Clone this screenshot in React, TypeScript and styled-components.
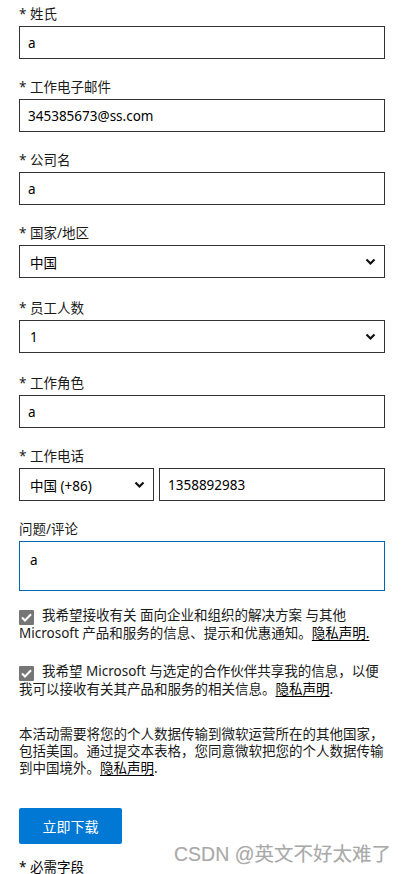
import React from "react";
import styled, { createGlobalStyle } from "styled-components";

const Global = createGlobalStyle`
  html, body { margin: 0; padding: 0; background: #fff; }
  body {
    font-family: "Noto Sans", "Noto Sans CJK SC", sans-serif;
    color: #000;
    font-size: 13.5px;
  }
  * { box-sizing: border-box; }
`;

const Page = styled.div`
  position: relative;
  width: 405px;
  height: 874px;
  overflow: hidden;
  padding: 4px 20px 0 19px;
  display: flex;
  flex-direction: column;
  & > * { flex-shrink: 0; }
`;

const Field = styled.div<{ $extra?: number }>`
  display: flex;
  flex-direction: column;
  margin-bottom: ${(p) => 18 + (p.$extra ?? 0)}px;
`;

const Label = styled.label`
  font-size: 13.5px;
  line-height: 20px;
  height: 20px;
  margin-bottom: 2px;
  color: #1a1a1a;
  white-space: nowrap;
`;

const TextInput = styled.div`
  height: 33px;
  border: 1.5px solid #333;
  padding: 0 8px;
  display: flex;
  align-items: center;
  font-size: 13.5px;
  color: #000;
`;

const SelectBox = styled.div<{ $w?: string }>`
  height: 33px;
  width: ${(p) => p.$w ?? "100%"};
  flex: ${(p) => (p.$w ? "0 0 auto" : "1 1 auto")};
  border: 1.5px solid #333;
  padding: 0 8px 0 10px;
  display: flex;
  align-items: center;
  justify-content: space-between;
  font-size: 13.5px;
`;

const PhoneRow = styled.div`
  display: flex;
  gap: 5px;
`;

const PhoneInput = styled(TextInput)`
  flex: 1 1 auto;
`;

const TextArea = styled.div`
  height: 50px;
  border: 1.5px solid #0067b8;
  padding: 9px 10px;
  font-size: 13.5px;
  line-height: 18px;
`;

const CheckRow = styled.div<{ $mt: number }>`
  margin-top: ${(p) => p.$mt}px;
  font-size: 13.5px;
  line-height: 17px;
  color: #1a1a1a;
`;

const Box = styled.span`
  display: inline-flex;
  vertical-align: -2px;
  width: 15px;
  height: 15px;
  background: #767676;
  border-radius: 1px;
  align-items: center;
  justify-content: center;
  margin-right: 8px;
`;

const Link = styled.a`
  display: inline-block;
  line-height: 17px;
  color: #000;
  text-decoration: underline;
  text-underline-offset: 2px;
`;

const Para = styled.p`
  margin: 28px 0 0;
  font-size: 13.5px;
  line-height: 17px;
  color: #1a1a1a;
`;

const Button = styled.button`
  margin-top: 31px;
  width: 103px;
  height: 36px;
  border: none;
  border-radius: 2px;
  background: #0078d4;
  color: #fff;
  font-family: inherit;
  font-size: 14px;
  align-self: flex-start;
  padding: 0;
`;

const Required = styled.div`
  margin-top: 17px;
  font-size: 13.5px;
  line-height: 13px;
`;

const Watermark = styled.div`
  position: absolute;
  right: 14px;
  bottom: 7px;
  font-family: "Liberation Sans", "Noto Sans CJK SC", sans-serif;
  font-size: 19.5px;
  color: #a9a9a9;
  text-shadow: 0 0 1px #e6e6e6;
  white-space: nowrap;
`;

const Chevron = () => (
  <svg width="11" height="8" viewBox="0 0 11 8">
    <path d="M1.5 1.5 L5.5 5.5 L9.5 1.5" fill="none" stroke="#111" strokeWidth="2.2" />
  </svg>
);

const Check = () => (
  <svg width="11" height="9" viewBox="0 0 11 9">
    <path d="M1 4.5 L4 7.5 L10 1.2" fill="none" stroke="#fff" strokeWidth="2" />
  </svg>
);

export default function App() {
  return (
    <>
      <Global />
      <Page>
        <Field>
          <Label>* 姓氏</Label>
          <TextInput>a</TextInput>
        </Field>
        <Field>
          <Label>* 工作电子邮件</Label>
          <TextInput>345385673@ss.com</TextInput>
        </Field>
        <Field>
          <Label>* 公司名</Label>
          <TextInput>a</TextInput>
        </Field>
        <Field $extra={2}>
          <Label>* 国家/地区</Label>
          <SelectBox>
            <span>中国</span>
            <Chevron />
          </SelectBox>
        </Field>
        <Field $extra={2}>
          <Label>* 员工人数</Label>
          <SelectBox>
            <span>1</span>
            <Chevron />
          </SelectBox>
        </Field>
        <Field>
          <Label>* 工作角色</Label>
          <TextInput>a</TextInput>
        </Field>
        <Field>
          <Label>* 工作电话</Label>
          <PhoneRow>
            <SelectBox $w="135px">
              <span>中国 (+86)</span>
              <Chevron />
            </SelectBox>
            <PhoneInput>1358892983</PhoneInput>
          </PhoneRow>
        </Field>
        <Field>
          <Label>问题/评论</Label>
          <TextArea>a</TextArea>
        </Field>
        <CheckRow $mt={-2}>
          <Box>
            <Check />
          </Box>
          我希望接收有关 面向企业和组织的解决方案 与其他 Microsoft 产品和服务的信息、提示和优惠通知。<Link>隐私声明.</Link>
        </CheckRow>
        <CheckRow $mt={21}>
          <Box>
            <Check />
          </Box>
          我希望 Microsoft 与选定的合作伙伴共享我的信息，以便我可以接收有关其产品和服务的相关信息。<Link>隐私声明</Link>.
        </CheckRow>
        <Para>
          本活动需要将您的个人数据传输到微软运营所在的其他国家，包括美国。通过提交本表格，您同意微软把您的个人数据传输到中国境外。<Link>隐私声明</Link>.
        </Para>
        <Button>立即下载</Button>
        <Required>* 必需字段</Required>
        <Watermark>CSDN @英文不好太难了</Watermark>
      </Page>
    </>
  );
}
